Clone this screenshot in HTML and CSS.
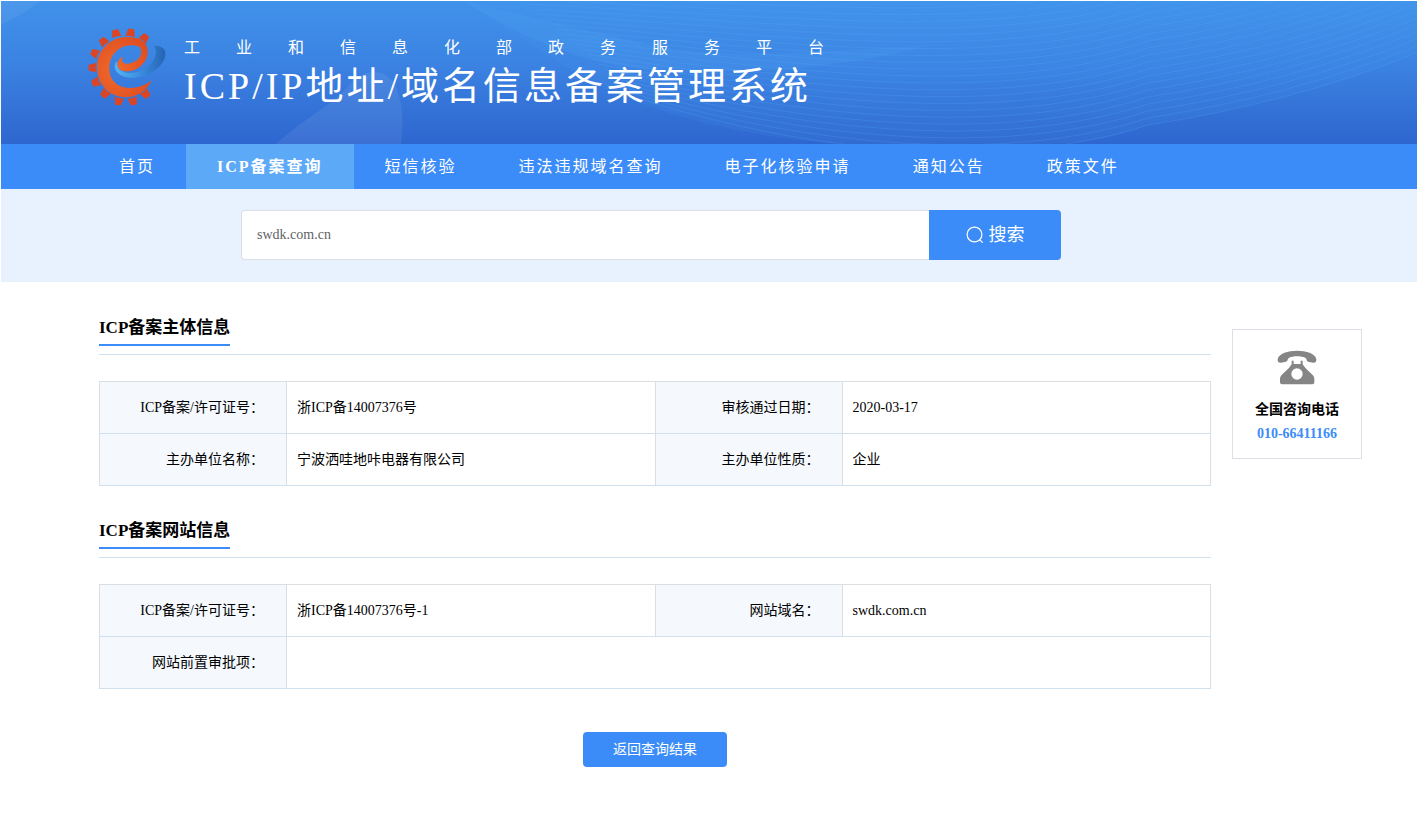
FILE: index.html
```html
<!DOCTYPE html>
<html lang="zh-CN">
<head>
  <meta charset="utf-8">
  <title>ICP/IP地址/域名信息备案管理系统</title>
  <meta name="viewport" content="width=device-width, initial-scale=1.0">
  <link rel="stylesheet" href="styles.css">
</head>
<body>
  <header class="header">
    <svg class="header-bg" viewBox="0 0 1416 143" preserveAspectRatio="none" aria-hidden="true">
      <g fill="#fff">
        <path opacity=".06" d="M0 24 C14 17 28 9 40 0 H0 Z"/>
        <path opacity=".07" d="M275 143 C300 120 324 108 345 88 C362 66 384 66 394 84 C402 100 403 124 400 143 Z"/>
      </g>
      <path fill="#4ea4f5" opacity=".1" d="M226 0 H1416 V52 C1320 92 1240 108 1147 124 C1110 138 1080 142 1050 143 H850 C740 138 650 110 600 85 C540 54 500 22 462 0 Z"/>
      <path fill="#4ea4f5" opacity=".2" d="M462 0 C540 18 590 30 640 42 C720 60 800 52 930 44 C800 78 700 70 640 68 C570 60 510 30 462 0 Z"/>
      <g id="waves" fill="none" stroke="#55a8f5" stroke-width="1"></g>
    </svg>
    <div class="brand">
      <svg class="logo" viewBox="24 24 240 240" aria-hidden="true">
        <defs>
          <linearGradient id="tail" x1="0" x2="1">
            <stop offset="0" stop-color="#55b4f4"/>
            <stop offset=".45" stop-color="#3c92e2"/>
            <stop offset="1" stop-color="#2663b4"/>
          </linearGradient>
          <radialGradient id="flame" cx=".35" cy=".55" r=".7">
            <stop offset="0" stop-color="#f06a2c"/>
            <stop offset="1" stop-color="#df4c20"/>
          </radialGradient>
          <path id="tooth" d="M-9 -12 L9 -12 L14 11 Q0 6 -14 11 Z"/>
        </defs>
        <g fill="#dc4524">
          <use href="#tooth" transform="translate(193 54) rotate(35)"/>
          <use href="#tooth" transform="translate(152 39) rotate(8)"/>
          <use href="#tooth" transform="translate(108 41) rotate(-14)"/>
          <use href="#tooth" transform="translate(71 65) rotate(-40)"/>
          <use href="#tooth" transform="translate(45 100) rotate(-65)"/>
          <use href="#tooth" transform="translate(38 143) rotate(-91)"/>
          <use href="#tooth" transform="translate(48 187) rotate(-114)"/>
          <use href="#tooth" transform="translate(75 221) rotate(-140)"/>
          <use href="#tooth" transform="translate(116 243) rotate(-170)"/>
          <use href="#tooth" transform="translate(159 243) rotate(166)"/>
          <use href="#tooth" transform="translate(197 222) rotate(142)"/>
        </g>
        <path fill="url(#tail)" d="M222 77 C246 76 258 88 256 104 C253 135 215 166 165 173 C130 176 104 160 104 138 C105 130 108 126 112 124 C110 145 125 160 150 159 C190 158 219 132 226 108 C229 94 228 84 222 77 Z"/>
        <path fill="url(#flame)" d="M215 181 C200 214 170 232 136 232 C86 232 51 190 51 142 C51 90 92 51 142 51 C180 51 203 66 203 95 C203 128 172 154 140 154 C118 154 106 138 115 122 C119 115 124 112 130 110 C122 122 128 131 140 131 C162 130 184 115 184 95 C184 80 172 76 154 76 C116 77 88 105 88 146 C88 180 112 203 148 204 C176 204 198 195 215 181 Z"/>
      </svg>
      <div class="brand-text">
        <p class="brand-sub">工业和信息化部政务服务平台</p>
        <h1 class="brand-title">ICP/IP地址/域名信息备案管理系统</h1>
      </div>
    </div>
  </header>

  <nav class="nav">
    <a href="#">首页</a>
    <a href="#" class="active">ICP备案查询</a>
    <a href="#">短信核验</a>
    <a href="#">违法违规域名查询</a>
    <a href="#">电子化核验申请</a>
    <a href="#">通知公告</a>
    <a href="#">政策文件</a>
  </nav>

  <div class="search-band">
    <form class="search">
      <input type="text" class="search-input" aria-label="域名" value="swdk.com.cn">
      <button type="submit" class="search-btn">
        <svg width="18" height="18" viewBox="0 0 18 18" fill="none" stroke="#fff" stroke-width="1.2" stroke-linecap="round" aria-hidden="true">
          <circle cx="8.5" cy="8.5" r="7.4"/>
          <path d="M13.8 13.8 L16.4 16.4"/>
        </svg>
        搜索
      </button>
    </form>
  </div>

  <div class="page">
    <main class="main">
      <section class="section">
        <div class="section-head"><h2>ICP备案主体信息</h2></div>
        <table class="info">
          <tr>
            <th scope="row">ICP备案/许可证号：</th>
            <td>浙ICP备14007376号</td>
            <th scope="row">审核通过日期：</th>
            <td>2020-03-17</td>
          </tr>
          <tr>
            <th scope="row">主办单位名称：</th>
            <td>宁波洒哇地咔电器有限公司</td>
            <th scope="row">主办单位性质：</th>
            <td>企业</td>
          </tr>
        </table>
      </section>

      <section class="section">
        <div class="section-head"><h2>ICP备案网站信息</h2></div>
        <table class="info">
          <tr>
            <th scope="row">ICP备案/许可证号：</th>
            <td>浙ICP备14007376号-1</td>
            <th scope="row">网站域名：</th>
            <td>swdk.com.cn</td>
          </tr>
          <tr>
            <th scope="row">网站前置审批项：</th>
            <td colspan="3"></td>
          </tr>
        </table>
      </section>

      <button type="button" class="back-btn">返回查询结果</button>
    </main>

    <aside class="contact">
      <svg width="40" height="35" viewBox="172 89 120 105" fill="#858585" aria-hidden="true">
        <path d="M174 116 C178 99 205 91 232 91 C260 91 286 99 290 116 C291 124 287 128 280 127 L265 124 C260 122 262 115 257 112 C243 106 221 106 208 112 C203 115 205 122 199 124 L184 127 C177 128 173 124 174 116 Z"/>
        <path fill-rule="evenodd" d="M216 121 H222 V131 H243 V121 H249 V132 C258 146 269 154 281 166 Q284 170 284 176 V186 Q284 192 278 192 H187 Q181 192 181 186 V176 Q181 170 184 166 C196 154 207 146 216 132 Z M232 144 A17 17 0 1 0 232 178 A17 17 0 1 0 232 144 Z"/>
      </svg>
      <p class="contact-label">全国咨询电话</p>
      <p class="contact-phone">010-66411166</p>
    </aside>
  </div>

  <script>
    // fine wave lines behind the title
    var waves = document.getElementById('waves');
    for (var i = 0; i < 26; i++) {
      var path = document.createElementNS('http://www.w3.org/2000/svg', 'path');
      path.setAttribute('d',
        'M' + (640 - i * 6) + ' ' + (98 - i * 5) +
        ' C800 ' + (150 - i * 7) + ' 1000 ' + (172 - i * 7) + ' 1147 ' + (124 - i * 7) +
        ' Q1290 ' + (102 - i * 7) + ' 1416 ' + (52 - i * 7));
      path.setAttribute('opacity', 0.25);
      waves.appendChild(path);
    }
  </script>
</body>
</html>
```

FILE: styles.css
```css
* {
  box-sizing: border-box;
}

body {
  margin: 0;
  padding: 1px 1px 0;
  font-family: "Liberation Serif", "Noto Sans CJK SC", serif;
  font-size: 14px;
  color: #000;
  background-color: #fff;
}

h1, h2, p {
  margin: 0;
}

.header {
  position: relative;
  padding: 27px 87px 36px;
  overflow: hidden;
  background: linear-gradient(#4092ea, #3b82e2 45%, #2e66cf);
}

.header-bg {
  position: absolute;
  top: 0;
  left: 0;
  width: 100%;
  height: 100%;
}

.brand {
  position: relative;
  display: flex;
  gap: 16px;
  height: 80px;
  color: #fff;
  white-space: nowrap;
}

.logo {
  width: 80px;
  height: 80px;
}

.brand-sub {
  padding-top: 8px;
  font-size: 16px;
  line-height: 24px;
  letter-spacing: 36px;
}

.brand-title {
  font-size: 38px;
  font-weight: normal;
  line-height: 52px;
  letter-spacing: 3px;
}

.nav {
  display: flex;
  padding: 0 87px;
  background-color: #3b8cf8;
}

.nav a {
  padding: 0 31px;
  font-size: 16px;
  line-height: 45px;
  letter-spacing: 2px;
  color: #fff;
  text-decoration: none;
  white-space: nowrap;
}

.nav a.active {
  font-weight: bold;
  background-color: #5ca9f8;
}

.search-band {
  padding: 21px 214px 22px 98px;
  background-color: #e8f1fe;
}

.search {
  display: flex;
  max-width: 820px;
  margin: 0 auto;
}

.search-input {
  flex: 1;
  min-width: 0;
  height: 50px;
  padding: 0 15px;
  font-family: inherit;
  font-size: 14px;
  color: #606266;
  border: 1px solid #dcdfe6;
  border-right: none;
  border-radius: 4px 0 0 4px;
}

.search-btn {
  display: flex;
  align-items: center;
  justify-content: center;
  gap: 5px;
  width: 132px;
  font-family: inherit;
  font-size: 18px;
  line-height: 24px;
  color: #fff;
  background-color: #3b8cf8;
  border: none;
  border-radius: 0 4px 4px 0;
  cursor: pointer;
}

.page {
  display: flex;
  align-items: flex-start;
  gap: 21px;
  padding: 34px 55px 40px 98px;
}

.main {
  flex: 1;
}

.section {
  margin-bottom: 33px;
}

.section-head {
  padding-bottom: 8px;
  border-bottom: 1px solid #d0e2f0;
  margin-bottom: 26px;
}

.section-head h2 {
  width: fit-content;
  padding-bottom: 4px;
  font-size: 17px;
  line-height: 24px;
  border-bottom: 2px solid #3b8cf8;
}

.info {
  width: 100%;
  line-height: 20px;
  table-layout: fixed;
  border-collapse: collapse;
  border: 1px solid #dcdfe2;
}

.info th,
.info td {
  height: 52px;
  padding: 0 10px;
  border: 1px solid #dcdfe2;
  border-bottom-color: #d0e0ee;
}

.info th {
  width: 187px;
  padding-right: 22px;
  font-weight: normal;
  text-align: right;
  background-color: #f5f9fe;
}

.back-btn {
  display: block;
  width: 144px;
  height: 35px;
  margin: 43px auto 0;
  font-family: inherit;
  font-size: 14px;
  line-height: 20px;
  color: #fff;
  background-color: #3b8cf8;
  border: none;
  border-radius: 4px;
  cursor: pointer;
}

.contact {
  width: 130px;
  margin-top: 13px;
  padding: 20px 0 12px;
  font-weight: bold;
  line-height: 24px;
  text-align: center;
  border: 1px solid #dcdfe6;
}

.contact svg {
  display: block;
  margin: 0 auto 13px;
}

.contact-phone {
  color: #3b8cf8;
}
```
